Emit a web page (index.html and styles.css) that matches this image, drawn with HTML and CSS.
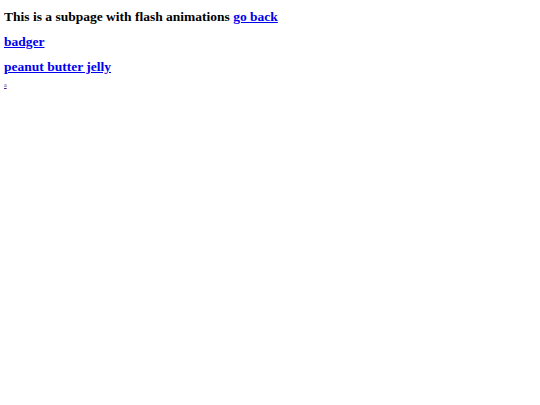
FILE: index.html
```html
<!DOCTYPE html>
<html>
<head>
<meta charset="utf-8">
<link rel="stylesheet" href="styles.css">
</head>
<body>
<h3 class="line">This is a subpage with flash animations <a href="#back">go back</a></h3>
<h3 class="line"><a href="#badger">badger</a></h3>
<h3 class="line"><a href="#pbj">peanut butter jelly</a></h3>
<a class="tiny" href="#a">a</a>
</body>
</html>
```

FILE: styles.css
```css
body {
  margin: 4px;
  font-family: "Liberation Serif", "Times New Roman", serif;
  background: #fff;
  color: #000;
}
.line {
  margin: 0;
  font-size: 13.5px;
  font-weight: bold;
  line-height: 25px;
}
.line a {
  color: #0000ee;
}
.tiny {
  display: block;
  font-size: 6px;
  line-height: 12px;
  color: #551a8b;
}
```
